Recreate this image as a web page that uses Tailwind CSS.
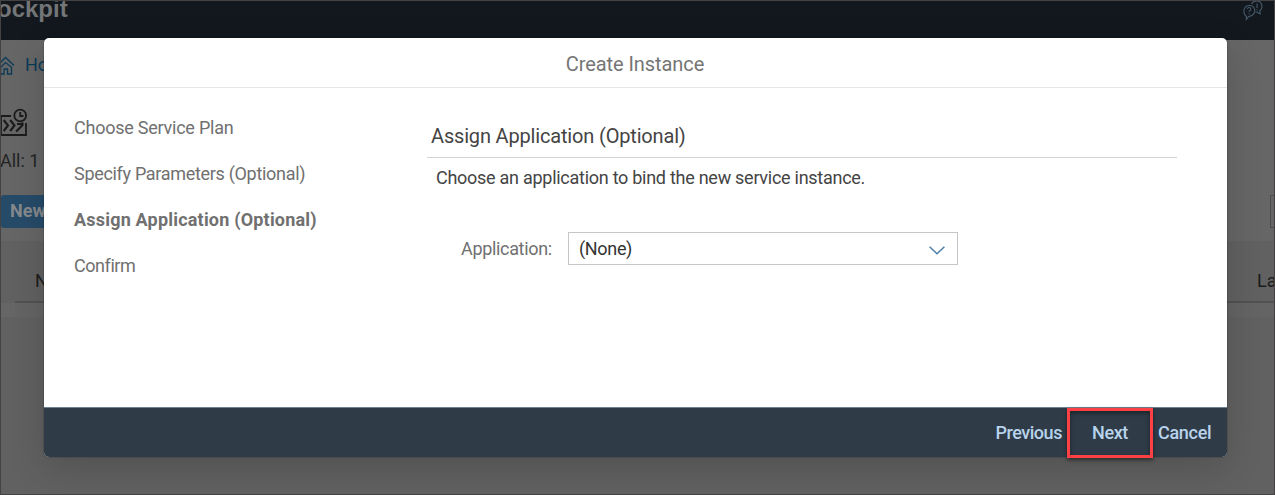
<!DOCTYPE html>
<html lang="en">
<head>
<meta charset="utf-8">
<title>Create Instance</title>
<script src="https://cdn.jsdelivr.net/npm/@tailwindcss/browser@4"></script>
</head>
<body class="relative h-[495px] w-[1275px] overflow-hidden bg-[#666] font-['Roboto',sans-serif] text-[18px] leading-6 text-[#2a2a2a]">
  <div class="flex h-full flex-col">
    <header class="flex h-10 shrink-0 items-start justify-between overflow-hidden bg-[#12181d]">
      <div class="-ml-[3px] -mt-[5px] font-['Liberation_Sans',sans-serif] text-[24px] leading-7 font-bold text-[#747576]">ockpit</div>
      <svg class="mr-[11px]" width="22" height="22" viewBox="0 0 22 22" fill="none" stroke="#465a6b" stroke-width="1.1">
        <path d="M4.5 16.5C0.5 13.5 1 6 7 5.500C13 5 14.500 12 10.500 15C8.800 16.300 7.500 16.200 6.800 16.400L4.300 19.300Z"/>
        <path d="M9.500 4C11.500 0 18 0 19.500 4C20.500 7 19.500 9.500 17.800 11L18 14L15 12H13.500"/>
        <path d="M5.400 9C5.500 7 8.900 7 8.800 9.200C8.800 10.600 7.100 10.400 7.100 12M7.100 13.200V14.200M15 3.500V8M15 9.200V10.200"/>
      </svg>
    </header>
    <main class="flex grow flex-col">
      <div class="flex h-[50px] items-center gap-[10px] text-[#0b3b58]">
        <svg class="-ml-px" width="16" height="20" viewBox="0 0 16 20" fill="none" stroke="#0b3b58" stroke-width="1.300">
          <path d="M0 9L6.500 2.500L15 10.500M1.500 12.500L6.500 7.500L12.500 12.300V19H8.500V14H5V19H1.500Z"/>
        </svg>
        <span>Home</span>
      </div>
      <div class="h-[58px] pt-[18px]">
        <svg width="28" height="29" viewBox="0 0 28 29" fill="none" stroke="#1b1b1b" stroke-width="1.800">
          <path d="M11 8H1V27H26V15"/><circle cx="20.200" cy="7.500" r="5.900"/>
          <path d="M20.200 4V8H23.500"/>
          <path stroke-width="2.100" d="M3.700 12L8 17.500L3.700 23M10.200 12L14.500 17.500L10.200 23M16.200 23.500L22.500 17V14.500M17 16H22"/>
        </svg>
      </div>
      <div class="flex h-[47px] items-start pt-px text-[#242424]">All: 1</div>
      <div class="flex h-[46px] items-start justify-between">
        <div class="ml-px h-[33px] w-20 rounded-[3px] bg-[#264b69] pl-[9px] leading-[32px] font-bold text-[#85898c]">New</div>
        <div class="h-[33px] w-[5px] border border-r-0 border-[#4b4b4b]"></div>
      </div>
      <div class="h-[62px] bg-[#616161] pl-[15px]">
        <div class="flex h-full items-center justify-between border-b-2 border-[#525252] text-[#1c1c1c]"><span class="ml-5 mt-5">N</span><span class="mt-5 w-[18px]">La</span></div>
      </div>
      <div class="ml-[15px] h-[14px] bg-[#646464]"></div>
      <div class="grow bg-[#616161]"></div>
    </main>
  </div>

  <div class="absolute top-[38px] left-[44px] flex h-[419px] w-[1183px] flex-col rounded-[5px] bg-white shadow-[0_0_0_1px_rgba(0,0,0,0.12),0_12px_36px_rgba(0,0,0,0.16)]">
    <div class="flex h-[50px] shrink-0 items-center justify-center border-b border-[#e6e6e6] pt-[2px] text-[20px] text-[#757575]"><span class="mr-px tracking-[-0.08px]">Create Instance</span></div>
    <div class="flex h-[319px] shrink-0">
      <nav class="flex w-[383px] flex-col gap-[22px] pt-7 pl-[30px] text-[#707070]">
        <div><span class="tracking-[-0.24px]">Choose Service Plan</span></div>
        <div><span class="tracking-[-0.31px]">Specify Parameters (Optional)</span></div>
        <div><span class="font-bold tracking-[0.2px]">Assign Application (Optional)</span></div>
        <div><span class="tracking-[-0.45px]">Confirm</span></div>
      </nav>
      <section class="w-[750px] text-[#444]">
        <h2 class="h-[70px] border-b border-[#d3d3d3] pt-9 pl-1 text-[20px] tracking-[-0.17px]">Assign Application (Optional)</h2>
        <p class="mt-2 pl-[9px] tracking-[-0.27px]">Choose an application to bind the new service instance.</p>
        <div class="mt-[42px] flex h-[33px] items-center pl-[34px]">
          <span class="w-[107px] tracking-[-0.33px] text-[#707070]">Application:</span>
          <div class="flex h-full w-[390px] items-center justify-between border border-[#c6c6c6] pr-3 pl-[10px] text-[#333]">
            <span class="tracking-[-0.33px]">(None)</span>
            <svg class="mt-[4px]" width="16" height="9" viewBox="0 0 16 9" fill="none" stroke="#4d7fa8" stroke-width="1.500"><path d="M0.600 0.700L8 7.800L15.400 0.700"/></svg>
          </div>
        </div>
      </section>
    </div>
    <footer class="flex h-[50px] shrink-0 items-center justify-end rounded-b-[5px] border-t border-[#71808d] bg-[#2f3c48] font-medium text-[#b8d3ec]">
      <span class="mt-px mr-[5px] tracking-[-0.45px]">Previous</span>
      <div class="-mb-px flex h-[50px] w-[86px] shrink-0 items-center justify-center border-3 border-[#ff4145] shadow-[0_2px_4px_rgba(0,0,0,0.5),inset_0_2px_5px_rgba(0,0,0,0.45)]"><span class="tracking-[-0.4px]">Next</span></div>
      <span class="mt-px ml-[5px] w-[69px] tracking-[-0.3px]">Cancel</span>
    </footer>
  </div>
  <div class="pointer-events-none absolute inset-0 border border-[#454243]"></div>
</body>
</html>
